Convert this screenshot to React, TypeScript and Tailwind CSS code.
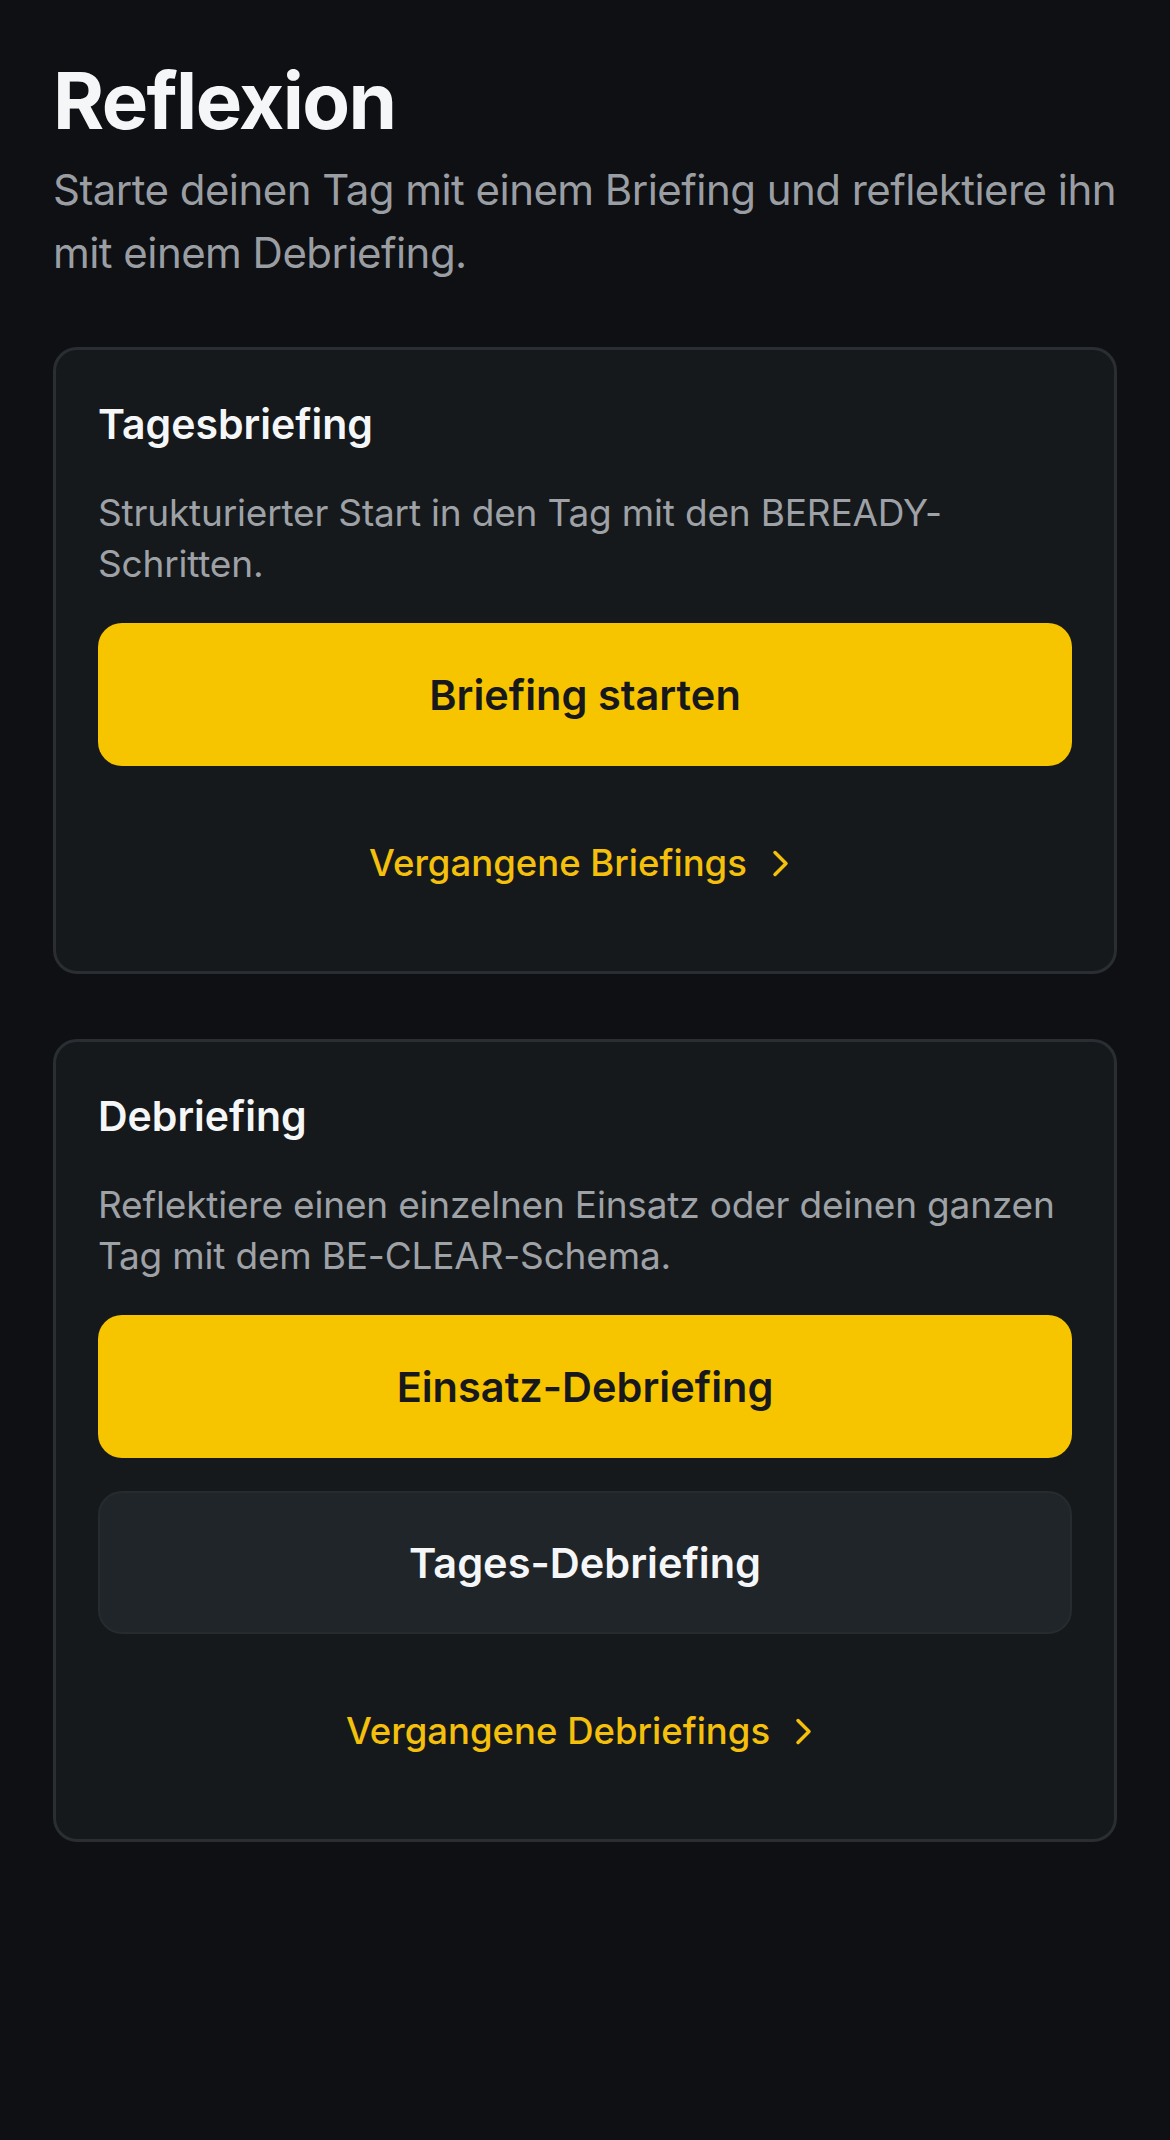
export default function App() {
  return (
    <div className="min-h-screen bg-[#0e1013] font-[Inter,'Noto_Sans',sans-serif] antialiased">
      <div className="px-[53px] pt-[54px] pb-[80px]">
        <h1 className="text-[78px] leading-[94px] font-bold tracking-[-0.02em] text-[#f5f6f7]">Reflexion</h1>
        <p className="mt-[10px] text-[42px] leading-[63px] tracking-[-0.013em] text-[#9a9ea3]">
          Starte deinen Tag mit einem Briefing und reflektiere ihn mit einem Debriefing.
        </p>

        <div className="mt-[63px] flex flex-col gap-[65px]">
          <Card
            title="Tagesbriefing"
            text="Strukturierter Start in den Tag mit den BEREADY-Schritten."
            link="Vergangene Briefings"
          >
            <PrimaryButton label="Briefing starten" />
          </Card>

          <Card
            title="Debriefing"
            text="Reflektiere einen einzelnen Einsatz oder deinen ganzen Tag mit dem BE-CLEAR-Schema."
            link="Vergangene Debriefings"
          >
            <div className="flex flex-col gap-[33px]">
              <PrimaryButton label="Einsatz-Debriefing" />
              <button className="h-[143px] w-full rounded-[24px] border-[2px] border-[#262b30] bg-[#202529] text-[41.5px] leading-[48px] font-semibold text-[#f5f6f7]">
                Tages-Debriefing
              </button>
            </div>
          </Card>
        </div>
      </div>
    </div>
  )
}

function Card({ title, text, link, children }: { title: string; text: string; link: string; children: React.ReactNode }) {
  return (
    <section className="rounded-[24px] border-[3px] border-[#2a2d32] bg-[#16191c] px-[42px] pt-[50px] pb-[87px]">
      <h2 className="text-[41px] leading-[48px] font-semibold text-[#f5f6f7]">{title}</h2>
      <p className="mt-[39px] text-[37px] leading-[51px] tracking-[-0.005em] text-[#9ea2a7]">{text}</p>
      <div className="mt-[34px]">{children}</div>
      <a href="#" className="mt-[76px] flex items-center justify-center gap-[25px] pr-[12px] text-[36.5px] leading-[42px] font-medium text-[#f4c00c]">
        {link}
        <svg width="17" height="27" viewBox="0 0 17 27" fill="none" stroke="currentColor" strokeWidth="3.5" strokeLinecap="round" strokeLinejoin="round">
          <path d="M3 2.5 L14 13.5 L3 24.5" />
        </svg>
      </a>
    </section>
  )
}

function PrimaryButton({ label }: { label: string }) {
  return (
    <button className="h-[143px] w-full rounded-[24px] bg-[#f7c400] text-[41.5px] leading-[48px] font-semibold text-[#16181b]">
      {label}
    </button>
  )
}
